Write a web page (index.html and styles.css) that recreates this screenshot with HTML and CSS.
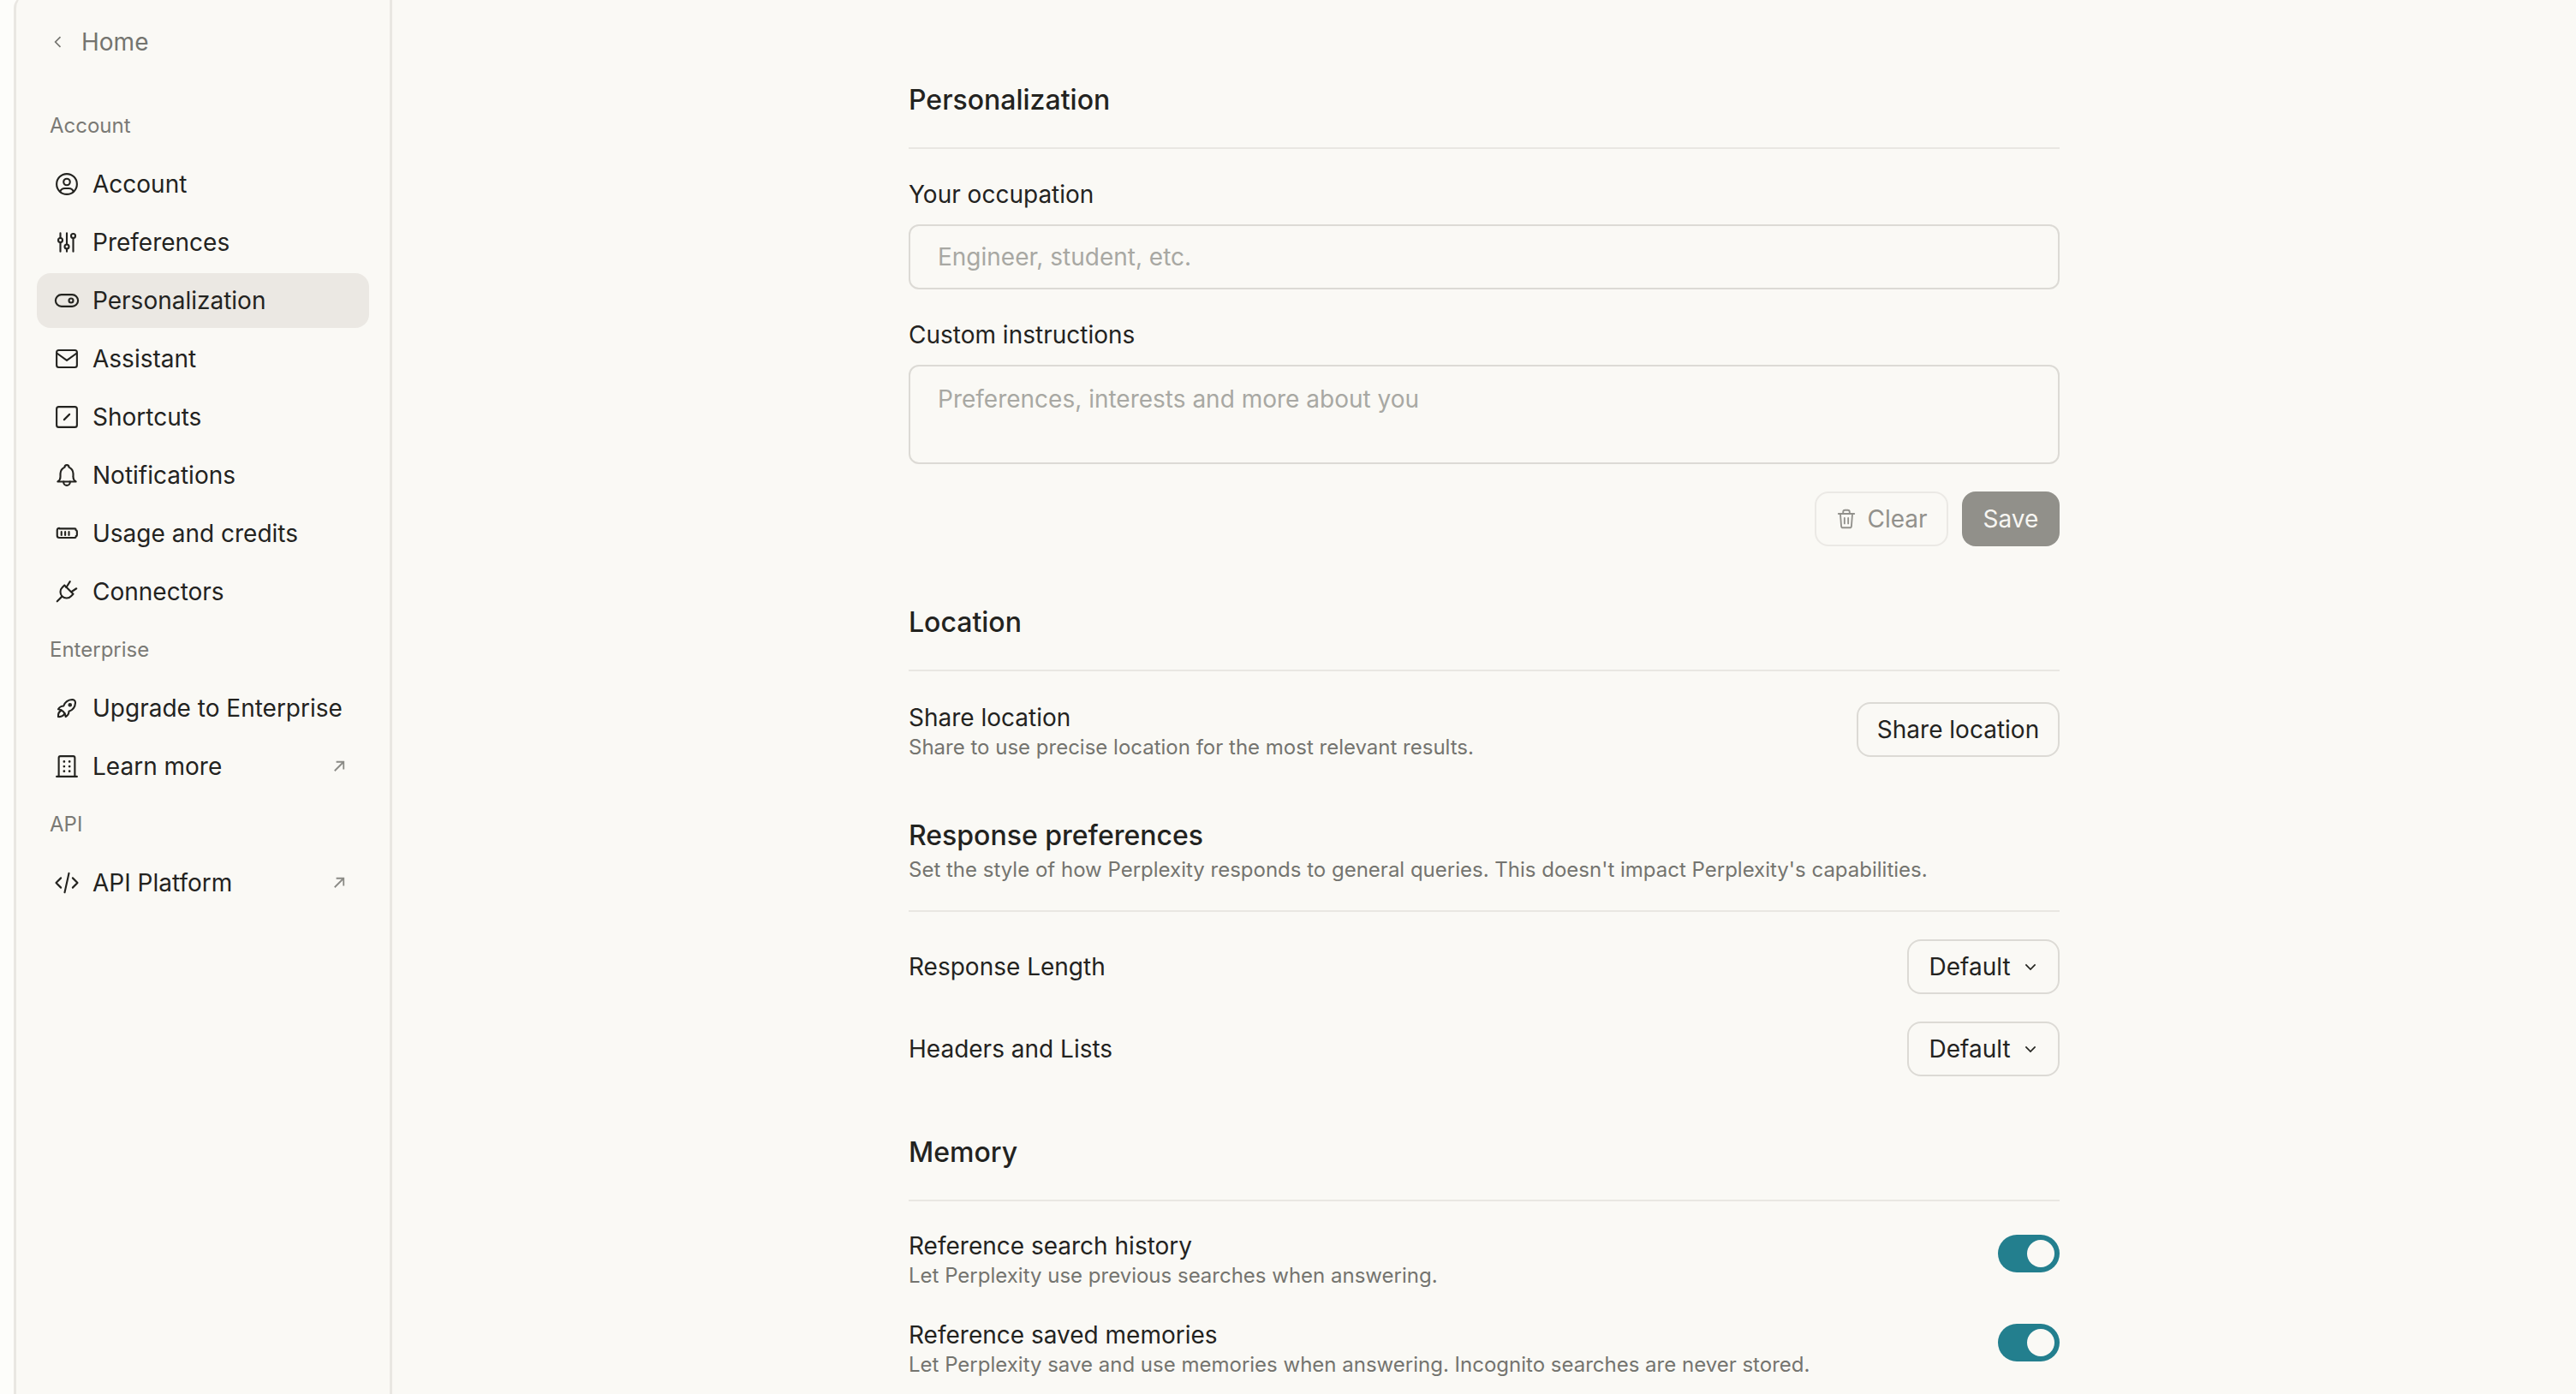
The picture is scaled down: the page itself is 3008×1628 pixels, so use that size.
FILE: index.html
```html
<!DOCTYPE html>
<html lang="en">
<head>
    <meta charset="UTF-8">
    <title>Personalization</title>
    <link rel="stylesheet" href="styles.css">
</head>
<body>
    <div class="app">
        <aside class="sidebar">
            <a class="home">
                <svg class="home-icon" viewBox="0 0 24 24"><path d="M15 5l-7 7 7 7"/></svg>
                <span>Home</span>
            </a>

            <div class="group-label first">Account</div>
            <a class="nav-item">
                <svg class="icon" viewBox="0 0 24 24"><circle cx="12" cy="12" r="9.5"/><circle cx="12" cy="10" r="3"/><path d="M5.8 19a4.5 4.5 0 0 1 4.2-3h4a4.5 4.5 0 0 1 4.2 3"/></svg>
                <span>Account</span>
            </a>
            <a class="nav-item">
                <svg class="icon" viewBox="0 0 24 24"><circle cx="6" cy="10" r="2"/><path d="M6 3.500v4.500M6 12v8.500"/><circle cx="12" cy="16" r="2"/><path d="M12 3.500V14M12 18v2.500"/><circle cx="18" cy="6" r="2"/><path d="M18 8v12.500"/></svg>
                <span>Preferences</span>
            </a>
            <a class="nav-item active">
                <svg class="icon" viewBox="0 0 24 24"><rect x="1.500" y="6.500" width="21" height="11" rx="5.500"/><circle cx="16" cy="12" r="2"/></svg>
                <span>Personalization</span>
            </a>
            <a class="nav-item">
                <svg class="icon" viewBox="0 0 24 24"><rect x="2.500" y="4" width="19" height="16" rx="2"/><path d="M3 7l9 6.500L21 7"/></svg>
                <span>Assistant</span>
            </a>
            <a class="nav-item">
                <svg class="icon" viewBox="0 0 24 24"><rect x="2.500" y="2.500" width="19" height="19" rx="2"/><path d="M9.500 14.500l5-5"/></svg>
                <span>Shortcuts</span>
            </a>
            <a class="nav-item">
                <svg class="icon" viewBox="0 0 24 24"><path d="M10 4.500a2 2 0 1 1 4 0a7 7 0 0 1 4 6v3a5 5 0 0 0 2.500 4.500h-17a5 5 0 0 0 2.500-4.500v-3a7 7 0 0 1 4-6"/><path d="M9 18v.500a3 3 0 0 0 6 0V18"/></svg>
                <span>Notifications</span>
            </a>
            <a class="nav-item">
                <svg class="icon" viewBox="0 0 24 24"><path d="M5 7.500h14.500a1 1 0 0 1 1 1v.500a1 1 0 0 1 1 1v3.500a1 1 0 0 1-1 1v.500a1 1 0 0 1-1 1H5a2 2 0 0 1-2-2v-5a2 2 0 0 1 2-2z"/><path d="M7 10.500v3M10.500 10.500v3M14 10.500v3"/></svg>
                <span>Usage and credits</span>
            </a>
            <a class="nav-item">
                <svg class="icon" viewBox="0 0 24 24"><path d="M9.800 6l8.200 8.200-2 2a5.800 5.800 0 1 1-8.200-8.200z"/><path d="M3 21l4.500-4.500M15 2.500l-3.500 5.500M21 9l-4.500 3"/></svg>
                <span>Connectors</span>
            </a>

            <div class="group-label">Enterprise</div>
            <a class="nav-item">
                <svg class="icon" viewBox="0 0 24 24"><path d="M4 13a8 8 0 0 1 7 7a6 6 0 0 0 3-5a9 9 0 0 0 6-8a3 3 0 0 0-3-3a9 9 0 0 0-8 6a6 6 0 0 0-5 3"/><path d="M7 14a6 6 0 0 0-3 6a6 6 0 0 0 6-3"/><circle cx="15" cy="9" r="1"/></svg>
                <span>Upgrade to Enterprise</span>
            </a>
            <a class="nav-item">
                <svg class="icon" viewBox="0 0 24 24"><path d="M2.500 21.500h19M4.500 21.500V4a1.500 1.500 0 0 1 1.500-1.500h12a1.500 1.500 0 0 1 1.500 1.500v17.500"/><path class="dots" d="M9.500 7.500h.01M14.500 7.500h.01M9.500 12h.01M14.500 12h.01M9.500 16.500h.01M14.500 16.500h.01"/></svg>
                <span>Learn more</span>
                <svg class="external" viewBox="0 0 24 24"><path d="M5 19L19 5M7.500 5H19v11.500"/></svg>
            </a>

            <div class="group-label">API</div>
            <a class="nav-item">
                <svg class="icon" viewBox="0 0 24 24"><path d="M6.500 7.500L2 12l4.500 4.500M17.500 7.500L22 12l-4.500 4.500M14 3l-4 18"/></svg>
                <span>API Platform</span>
                <svg class="external" viewBox="0 0 24 24"><path d="M5 19L19 5M7.500 5H19v11.500"/></svg>
            </a>
        </aside>

        <main class="main">
            <div class="column">
                <section class="section">
                    <div class="section-head">
                        <h2>Personalization</h2>
                    </div>
                    <div class="field">
                        <label class="label">Your occupation</label>
                        <input class="input" type="text" placeholder="Engineer, student, etc.">
                    </div>
                    <div class="field">
                        <label class="label">Custom instructions</label>
                        <textarea class="input textarea" placeholder="Preferences, interests and more about you"></textarea>
                    </div>
                    <div class="actions">
                        <button class="btn btn-clear">
                            <svg class="trash" viewBox="0 0 24 24"><path d="M3.500 6.500h17M5.500 6.500l1 13a2 2 0 0 0 2 2h7a2 2 0 0 0 2-2l1-13M8.500 6.500V4.500a2 2 0 0 1 2-2h3a2 2 0 0 1 2 2v2M10 11v6M14 11v6"/></svg>
                            Clear
                        </button>
                        <button class="btn btn-save">Save</button>
                    </div>
                </section>

                <section class="section">
                    <div class="section-head">
                        <h2>Location</h2>
                    </div>
                    <div class="row row-top">
                        <div>
                            <div class="label">Share location</div>
                            <div class="desc">Share to use precise location for the most relevant results.</div>
                        </div>
                        <button class="btn btn-outline">Share location</button>
                    </div>
                </section>

                <section class="section section-tight">
                    <div class="section-head with-desc">
                        <h2>Response preferences</h2>
                        <div class="desc">Set the style of how Perplexity responds to general queries. This doesn't impact Perplexity's capabilities.</div>
                    </div>
                    <div class="row row-select">
                        <div class="label">Response Length</div>
                        <button class="btn btn-outline select">Default
                            <svg class="chevron" viewBox="0 0 24 24"><path d="M4.500 8.500l7.500 7.500 7.500-7.500"/></svg>
                        </button>
                    </div>
                    <div class="row row-select">
                        <div class="label">Headers and Lists</div>
                        <button class="btn btn-outline select">Default
                            <svg class="chevron" viewBox="0 0 24 24"><path d="M4.500 8.500l7.500 7.500 7.500-7.500"/></svg>
                        </button>
                    </div>
                </section>

                <section class="section">
                    <div class="section-head">
                        <h2>Memory</h2>
                    </div>
                    <div class="row row-toggle">
                        <div>
                            <div class="label">Reference search history</div>
                            <div class="desc">Let Perplexity use previous searches when answering.</div>
                        </div>
                        <div class="toggle"><div class="knob"></div></div>
                    </div>
                    <div class="row row-toggle">
                        <div>
                            <div class="label">Reference saved memories</div>
                            <div class="desc">Let Perplexity save and use memories when answering. Incognito searches are never stored.</div>
                        </div>
                        <div class="toggle"><div class="knob"></div></div>
                    </div>
                </section>
            </div>
        </main>
    </div>
</body>
</html>
```

FILE: styles.css
```css
* {
    box-sizing: border-box;
}
html, body {
    height: 100%;
}
body {
    margin: 0;
    background-color: #fdfdfa;
    color: #23231f;
    font-family: Inter, "Liberation Sans", sans-serif;
    font-size: 28px;
    overflow: hidden;
}
.app {
    display: flex;
    height: 1640px;
    margin-top: -6px;
    margin-left: 16px;
    background-color: #faf9f5;
    border-top-left-radius: 16px;
}
.sidebar {
    flex: 0 0 442px;
    padding: 37px 24px 0;
    border-left: 3px solid #e9e7e2;
    border-right: 3px solid #e9e7e2;
    border-top-left-radius: 16px;
}
.home {
    display: flex;
    align-items: center;
    height: 36px;
    padding-left: 15px;
    color: #74746f;
}
.home-icon {
    width: 20px;
    height: 24px;
    margin-right: 17px;
    fill: none;
    stroke: #74746f;
    stroke-width: 2;
}
.group-label {
    height: 32px;
    line-height: 32px;
    margin: 20px 0 20px 15px;
    font-size: 24px;
    color: #7a7a75;
}
.group-label.first {
    margin-top: 64px;
}
.nav-item {
    display: flex;
    align-items: center;
    height: 64px;
    margin-bottom: 4px;
    padding: 0 24px 0 20px;
    border-radius: 16px;
}
.nav-item.active {
    background-color: #ebe8e3;
}
.icon {
    flex: none;
    width: 30px;
    height: 30px;
    margin-right: 15px;
    fill: none;
    stroke: #23231f;
    stroke-width: 1.7;
    stroke-linecap: round;
    stroke-linejoin: round;
}
.icon .dots {
    stroke-width: 2.2;
}
.external {
    width: 18px;
    height: 18px;
    margin-left: auto;
    margin-right: 2px;
    fill: none;
    stroke: #8b8b86;
    stroke-width: 2.400;
}
.main {
    flex: 1;
    min-width: 0;
}
.column {
    width: 1344px;
    margin: 0 auto;
    padding-top: 102px;
}
.section {
    margin-bottom: 68px;
}
.section-tight {
    margin-top: -3px;
}
.section-head {
    padding-bottom: 34px;
    border-bottom: 2px solid #e9e7e2;
}
.section-head.with-desc {
    padding-bottom: 30px;
}
h2 {
    margin: 0;
    font-size: 32px;
    font-weight: 500;
    line-height: 42px;
}
.label {
    line-height: 36px;
}
.desc {
    font-size: 24px;
    line-height: 34px;
    color: #74746f;
}
.with-desc .desc {
    margin-top: 2px;
}
.field {
    margin-top: 35px;
}
.input {
    display: block;
    width: 100%;
    height: 76px;
    margin-top: 17px;
    padding: 0 32px;
    border: 2px solid #dcdad5;
    border-radius: 12px;
    background: transparent;
    color: #23231f;
    font-family: inherit;
    font-size: 28px;
    outline: none;
}
.textarea {
    height: 116px;
    padding-top: 20px;
    resize: none;
    line-height: 36px;
}
.input::placeholder {
    color: #a8a8a3;
    opacity: 1;
}
.actions {
    display: flex;
    justify-content: flex-end;
    gap: 16px;
    margin-top: 32px;
}
.btn {
    display: flex;
    align-items: center;
    justify-content: center;
    height: 64px;
    padding: 0;
    border-radius: 16px;
    border: 2px solid #dcdad5;
    background: transparent;
    color: #23231f;
    font-family: inherit;
    font-size: 28px;
}
.btn-clear {
    width: 156px;
    border-color: #ebe9e5;
    color: #92918c;
}
.trash {
    width: 26px;
    height: 26px;
    margin-right: 11px;
    fill: none;
    stroke: #92918c;
    stroke-width: 1.700;
    stroke-linecap: round;
    stroke-linejoin: round;
}
.btn-save {
    width: 114px;
    border: none;
    background-color: #91908a;
    color: #f7f6f2;
}
.btn-outline {
    flex: none;
    width: 237px;
}
.select {
    width: 178px;
}
.chevron {
    width: 18px;
    height: 18px;
    margin-left: 14px;
    fill: none;
    stroke: #23231f;
    stroke-width: 2.200;
}
.row {
    display: flex;
    justify-content: space-between;
}
.row-top {
    margin-top: 36px;
    align-items: flex-start;
}
.row-select {
    align-items: center;
    margin-top: 32px;
}
.row-toggle {
    align-items: flex-start;
    margin-top: 34px;
}
.toggle {
    display: flex;
    justify-content: flex-end;
    align-items: center;
    flex: none;
    width: 72px;
    height: 44px;
    margin-top: 5px;
    padding-right: 6px;
    border-radius: 22px;
    background-color: #237f8e;
}
.knob {
    width: 32px;
    height: 32px;
    border-radius: 50%;
    background-color: #faf9f5;
}
```
